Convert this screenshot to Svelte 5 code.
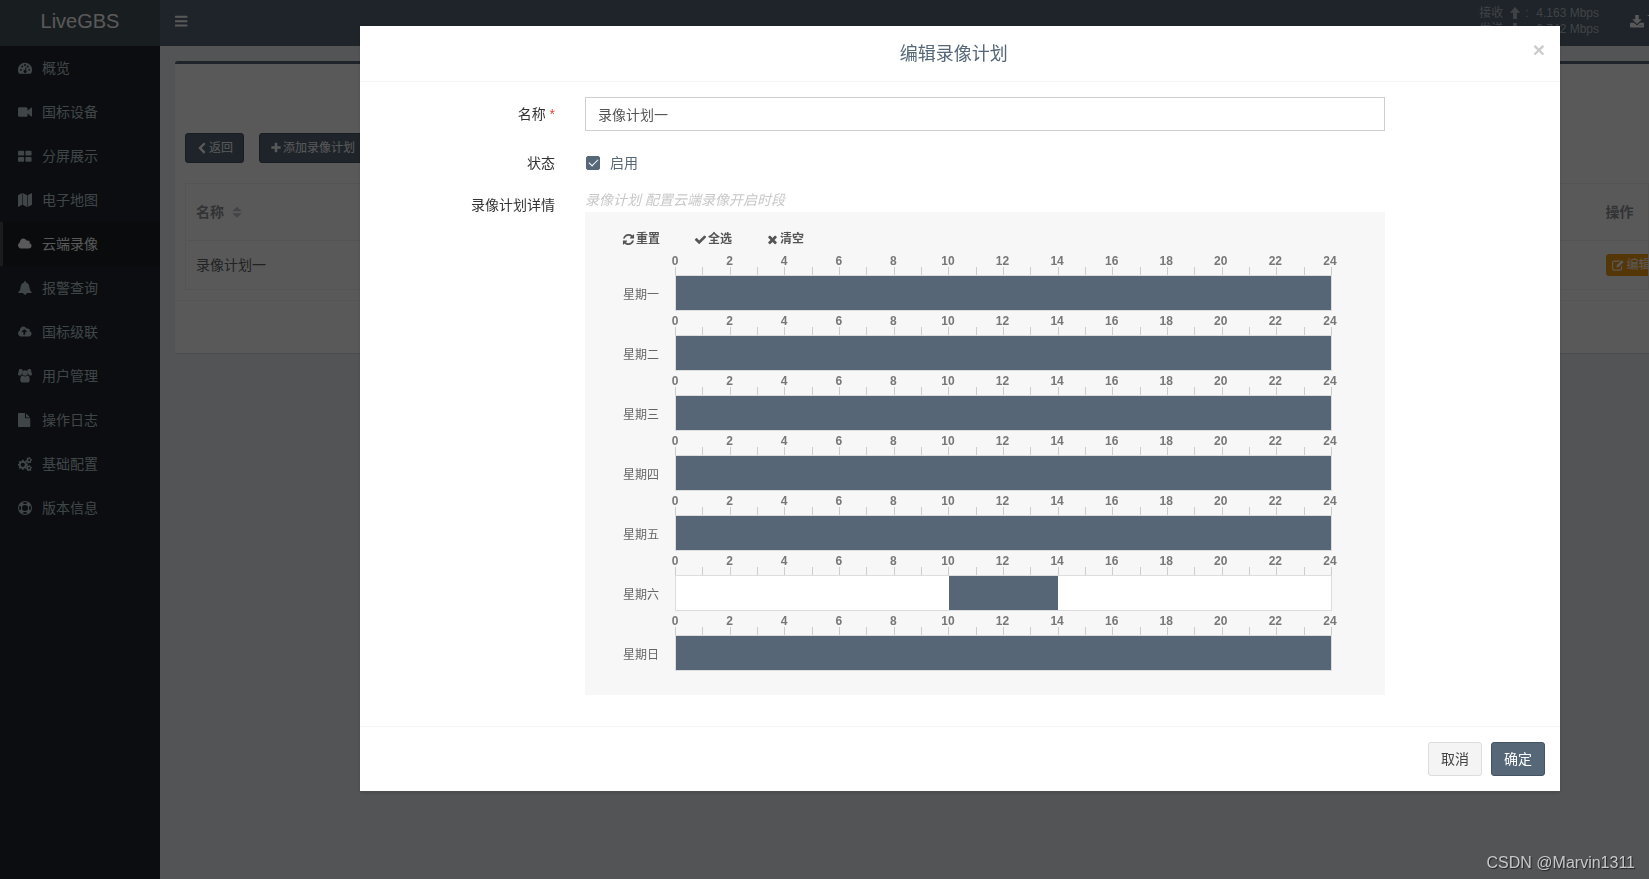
<script lang="ts">
    type Icon = { box: string; d: string };

    const cloud = 'q0 159-112.5 271.5t-271.5 112.5h-1088q-185 0-316.5-131.5t-131.5-316.5q0-132 71-241.5t187-163.5q-2-28-2-43 0-212 150-362t362-150q158 0 286.5 88t187.5 230q70-62 166-62 106 0 181 75t75 181q0 75-41 138 129 30 213 134.5t84 239.5z';

    const icons: Record<string, Icon> = {
        dashboard: { box: '0 0 16 16', d: 'M8 2a8 8 0 0 0-6.8 12.2q.2.3.6.3h12.4q.4 0 .6-.3A8 8 0 0 0 8 2zM3.3 9a1.1 1.1 0 1 1 0 2.2 1.1 1.1 0 0 1 0-2.2zM4.9 5.1a1.1 1.1 0 1 1 0 2.2 1.1 1.1 0 0 1 0-2.2zM8 3.5a1.1 1.1 0 1 1 0 2.2 1.1 1.1 0 0 1 0-2.2zM11.2 5.1a1.1 1.1 0 1 1 0 2.2 1.1 1.1 0 0 1 0-2.2zM12.7 9a1.1 1.1 0 1 1 0 2.2 1.1 1.1 0 0 1 0-2.2zM8.9 6.8l.9.3-.9 3.3a1.7 1.7 0 1 1-1-.2z' },
        video: { box: '0 0 16 16', d: 'M1.8 2.500h7.400Q11 2.500 11 4.300v2.400L14.900 3q1.100-.4 1.100.6v8.800q0 1-1.100.6L11 9.300v2.400Q11 13.500 9.200 13.500H1.800Q0 13.500 0 11.700V4.300Q0 2.500 1.800 2.500z' },
        grid: { box: '0 0 16 16', d: 'M1 2h5q1 0 1 1v3.500q0 1-1 1H1q-1 0-1-1V3q0-1 1-1zM9.500 2h5q1 0 1 1v3.500q0 1-1 1h-5q-1 0-1-1V3q0-1 1-1zM1 9h5q1 0 1 1v3.500q0 1-1 1H1q-1 0-1-1V10q0-1 1-1zM9.500 9h5q1 0 1 1v3.500q0 1-1 1h-5q-1 0-1-1V10q0-1 1-1z' },
        map: { box: '0 0 16 16', d: 'M0 2.600L4.800 0v13.400L.6 15.800Q0 16 0 15.400zM5.500 0l4.800 2.500v13.400l-4.800-2.500zM11 2.600L15.400.2q.6-.2.6.4v12.800L11 16z' },
        cloud: { box: '64 0 1984 1792', d: 'M1984 1152' + cloud },
        bell: { box: '0 0 16 16', d: 'M8 0q1 0 1 1v.6q3.600.8 3.900 4.900.2 4 2.600 6.200v1.100H10a2 2 0 0 1-4 0H.5v-1.100Q2.900 10.500 3.100 6.500 3.400 2.400 7 1.600V1q0-1 1-1z' },
        upload: { box: '64 0 1984 1792', d: 'M1344 864q0-14-9-23l-352-352q-9-9-23-9t-23 9l-351 351q-10 12-10 24 0 14 9 23t23 9h224v352q0 13 9.5 22.5t22.5 9.5h192q13 0 22.5-9.5t9.5-22.5v-352h224q13 0 22.5-9.5t9.5-22.5zm640 288' + cloud },
        users: { box: '0 0 16 16', d: 'M3.200 0a2.100 2.100 0 0 1 1.900 3Q4.300 4 4.500 6 3.500 6.300 3 7.500H1.500Q0 7.500 0 6 0 3.200 1.200 3.400A2.100 2.100 0 0 1 3.200 0zM12.800 0a2.100 2.100 0 0 0-1.900 3q.8 1 .6 3 1 .3 1.500 1.500h1.500Q16 7.500 16 6 16 3.200 14.800 3.400A2.100 2.100 0 0 0 12.800 0zM8 1.300a3.200 3.200 0 1 1 0 6.400A3.200 3.200 0 0 1 8 1.300zM5.300 7.300Q8 9.700 10.700 7.300q2.700.2 2.700 5.200Q13.400 15.500 11 15.500H5q-2.400 0-2.400-3 0-5 2.700-5.200z' },
        file: { box: '0 0 16 16', d: 'M.8 0H8v5.200q0 .8.8.8H14v9.200q0 .8-.8.8H.8q-.8 0-.8-.8V.8Q0 0 .8 0zM9.200 0.200L13.800 5H9.200z' },
        cogs: { box: '0 0 16 16', d: 'M4.500 3.200h2l.3 1.400 1 .4L9 4.300 10.300 5.700l-.8 1.100.4 1 1.300.2v1.900l-1.300.3-.4 1 .8 1.100L9 13.600l-1.200-.8-1 .4-.3 1.400h-2l-.2-1.400-1-.4-1.200.8L.8 12.200l.7-1.100-.4-1L0 9.900V8l1.100-.2.4-1L.8 5.700l1.300-1.400 1.200.7 1-.4zM5.500 6.500a2.400 2.400 0 1 0 0 4.800 2.400 2.400 0 0 0 0-4.800zM12.300.9L13.100 0l1.100.6-.1 1.100.6.6 1.100.1.200 1.300-1 .5-.3.800.5 1-.9.9-1.100-.4-.7.100-.7.900-1.100-.5v-1.100l-.5-.7-1.100-.2-.1-1.300 1-.5.2-.8-.4-1 .9-.9 1.100.4zM12.700 2.400a1.200 1.200 0 1 0 0 2.400 1.200 1.200 0 0 0 0-2.400zM12.300 9.900L13.100 9l1.100.6-.1 1.100.6.6 1.100.1.200 1.300-1 .5-.3.800.5 1-.9.9-1.100-.4-.7.100-.7.900-1.100-.5v-1.100l-.5-.7-1.100-.2-.1-1.300 1-.5.2-.8-.4-1 .9-.9 1.100.4zM12.700 11.400a1.200 1.200 0 1 0 0 2.400 1.200 1.200 0 0 0 0-2.400z' },
        ring: { box: '0 0 16 16', d: 'M8 0a8 8 0 1 1 0 16A8 8 0 0 1 8 0zM5.200 2l1.500 1.500q1.300-.4 2.600 0L10.800 2Q8 .5 5.200 2zM14 5.200l-1.500 1.500q.4 1.300 0 2.600L14 10.800Q15.500 8 14 5.200zM10.800 14l-1.500-1.500q-1.300.4-2.600 0L5.200 14q2.800 1.500 5.600 0zM2 10.800l1.500-1.500q-.4-1.300 0-2.600L2 5.200Q.5 8 2 10.800zM8 4.500a3.500 3.500 0 1 0 0 7 3.500 3.500 0 0 0 0-7z' },
        bars: { box: '0 0 16 16', d: 'M.6 2h13q.6 0 .6.6v1.200q0 .6-.6.6H.6Q0 4.400 0 3.800V2.600Q0 2 .6 2zM.6 7h13q.6 0 .6.6v1.200q0 .6-.6.6H.6Q0 9.400 0 8.800V7.600Q0 7 .6 7zM.6 12h13q.6 0 .6.6v1.200q0 .6-.6.6H.6q-.6 0-.6-.6v-1.200q0-.6.6-.6z' },
        arrowUp: { box: '0 0 16 16', d: 'M8 0l7 7.500h-4.500V16h-5V7.500H1z' },
        arrowDown: { box: '0 0 16 16', d: 'M8 16l7-7.500h-4.500V0h-5v8.500H1z' },
        download: { box: '0 0 16 16', d: 'M6 1h4v5h3.500L8 11.500 2.500 6H6zM0 11q0-1 1-1h3.500L8 13l3.500-3H15q1 0 1 1v3.500q0 .8-1 .8H1q-1 0-1-.8zM11 12.800h1v1h-1zM13 12.800h1v1h-1z' },
        back: { box: '0 0 16 16', d: 'M10.500.5l2.200 2.200L7.500 8l5.200 5.300-2.200 2.200L3 8z' },
        plus: { box: '0 0 1792 1792', d: 'M1600 736v192q0 40-28 68t-68 28h-416v416q0 40-28 68t-68 28h-192q-40 0-68-28t-28-68v-416h-416q-40 0-68-28t-28-68v-192q0-40 28-68t68-28h416v-416q0-40 28-68t68-28h192q40 0 68 28t28 68v416h416q40 0 68 28t28 68z' },
        sort: { box: '0 0 16 16', d: 'M8 1l6.500 6h-13zM8 15.500l6.500-6h-13z' },
        edit: { box: '0 0 16 16', d: 'M3 2h8l-1.300 1.500H3Q1.500 3.500 1.500 5v7.500Q1.500 14 3 14h7.500q1.500 0 1.500-1.500V10l1.500-1.500v4q0 3-3 3H3q-3 0-3-3V5q0-3 3-3zM13 1.500L15.500 4 8.500 11H6V8.500z' },
        refresh: { box: '0 0 1792 1792', d: 'M1639 1056q0 5-1 7-64 268-268 434.5t-478 166.5q-146 0-282.5-55t-243.5-157l-129 129q-19 19-45 19t-45-19-19-45v-448q0-26 19-45t45-19h448q26 0 45 19t19 45-19 45l-137 137q71 66 161 102t187 36q134 0 250-65t186-179q11-17 53-117 8-23 30-23h192q13 0 22.5 9.5t9.5 22.5zm25-800v448q0 26-19 45t-45 19h-448q-26 0-45-19t-19-45 19-45l138-138q-148-137-349-137-134 0-250 65t-186 179q-11 17-53 117-8 23-30 23h-199q-13 0-22.5-9.5t-9.5-22.5v-7q65-268 270-434.5t480-166.5q146 0 284 55.5t245 156.5l130-129q19-19 45-19t45 19 19 45z' },
        check: { box: '0 0 1792 1792', d: 'M1671 566q0 40-28 68l-724 724-136 136q-28 28-68 28t-68-28l-136-136-362-362q-28-28-28-68t28-68l136-136q28-28 68-28t68 28l294 295 656-657q28-28 68-28t68 28l136 136q28 28 28 68z' },
        times: { box: '0 0 1792 1792', d: 'M1490 1322q0 40-28 68l-136 136q-28 28-68 28t-68-28l-294-294-294 294q-28 28-68 28t-68-28l-136-136q-28-28-28-68t28-68l294-294-294-294q-28-28-28-68t28-68l136-136q28-28 68-28t68 28l294 294 294-294q28-28 68-28t68 28l136 136q28 28 28 68t-28 68l-294 294 294 294q28 28 28 68z' }
    };

    const menu = [
        { icon: 'dashboard', text: '概览' },
        { icon: 'video', text: '国标设备' },
        { icon: 'grid', text: '分屏展示' },
        { icon: 'map', text: '电子地图' },
        { icon: 'cloud', text: '云端录像', active: true },
        { icon: 'bell', text: '报警查询' },
        { icon: 'upload', text: '国标级联' },
        { icon: 'users', text: '用户管理' },
        { icon: 'file', text: '操作日志' },
        { icon: 'cogs', text: '基础配置' },
        { icon: 'ring', text: '版本信息' }
    ];

    const hours = Array.from({ length: 25 }, (_, i) => i);

    let name = $state('录像计划一');
    let enabled = $state(true);

    // each range is [start hour, end hour]
    let week = $state([
        { day: '星期一', ranges: [[0, 24]] },
        { day: '星期二', ranges: [[0, 24]] },
        { day: '星期三', ranges: [[0, 24]] },
        { day: '星期四', ranges: [[0, 24]] },
        { day: '星期五', ranges: [[0, 24]] },
        { day: '星期六', ranges: [[10, 14]] },
        { day: '星期日', ranges: [[0, 24]] }
    ]);
    const initial = $state.snapshot(week);

    function reset() {
        week = structuredClone(initial);
    }

    function selectAll() {
        week = week.map((w) => ({ day: w.day, ranges: [[0, 24]] }));
    }

    function clear() {
        week = week.map((w) => ({ day: w.day, ranges: [] }));
    }
</script>

{#snippet icon(id: string)}
    <svg class="icon" viewBox={icons[id].box} aria-hidden="true"><path fill-rule="evenodd" d={icons[id].d} /></svg>
{/snippet}

<div class="page">
    <aside class="sidebar">
        <a class="logo" href="#/">LiveGBS</a>
        <nav>
            {#each menu as item}
                <a class="menu-item" class:active={item.active} href="#/">
                    {@render icon(item.icon)}
                    <span>{item.text}</span>
                </a>
            {/each}
        </nav>
    </aside>

    <div class="main">
        <header class="navbar">
            <button class="toggle" aria-label="菜单">{@render icon('bars')}</button>
            <div class="traffic">
                <div><span>接收</span>{@render icon('arrowUp')}<span class="colon">:</span><span>4.163 Mbps</span></div>
                <div><span>发送</span>{@render icon('arrowDown')}<span class="colon">:</span><span>0.742 Mbps</span></div>
            </div>
            <a class="download" href="#/">{@render icon('download')}<span>下载</span></a>
        </header>

        <section class="box">
            <div class="box-tools">
                <button class="btn small primary">{@render icon('back')}返回</button>
                <button class="btn small primary">{@render icon('plus')}添加录像计划</button>
            </div>
            <table>
                <thead>
                    <tr>
                        <th>名称 {@render icon('sort')}</th>
                        <th class="action">操作</th>
                    </tr>
                </thead>
                <tbody>
                    <tr>
                        <td>录像计划一</td>
                        <td class="action"><button class="edit">{@render icon('edit')}编辑</button></td>
                    </tr>
                </tbody>
            </table>
            <div class="box-footer"></div>
        </section>
    </div>
</div>

<div class="backdrop">
    <div class="modal" role="dialog" aria-modal="true" aria-labelledby="modal-title">
        <div class="modal-header">
            <h4 id="modal-title">编辑录像计划</h4>
            <button class="close" aria-label="关闭">×</button>
        </div>

        <form class="modal-body">
            <label class="label" for="plan-name">名称 <span class="required">*</span></label>
            <input class="text-input" id="plan-name" type="text" bind:value={name} />

            <span class="label">状态</span>
            <div class="state">
                <input id="plan-enabled" type="checkbox" bind:checked={enabled} />
                <label for="plan-enabled">启用</label>
            </div>

            <span class="label">录像计划详情</span>
            <div>
                <div class="hint">录像计划 配置云端录像开启时段</div>
                <div class="schedule">
                    <div class="schedule-tools">
                        <button type="button" onclick={reset}>{@render icon('refresh')}重置</button>
                        <button type="button" onclick={selectAll}>{@render icon('check')}全选</button>
                        <button type="button" onclick={clear}>{@render icon('times')}清空</button>
                    </div>
                    {#each week as row}
                        <div class="day">
                            <div class="day-name">{row.day}</div>
                            <div class="timeline">
                                <div class="hours">
                                    {#each hours.filter((h) => h % 2 === 0) as h}
                                        <span>{h}</span>
                                    {/each}
                                </div>
                                <div class="ticks">
                                    {#each hours as h (h)}
                                        <i></i>
                                    {/each}
                                </div>
                                <div class="bar">
                                    {#each row.ranges as [from, to]}
                                        <div class="range" style="left: {(from / 24) * 100}%; width: {((to - from) / 24) * 100}%"></div>
                                    {/each}
                                </div>
                            </div>
                        </div>
                    {/each}
                </div>
            </div>
        </form>

        <div class="modal-footer">
            <button class="btn default">取消</button>
            <button class="btn primary">确定</button>
        </div>
    </div>
</div>

<div class="watermark">CSDN @Marvin1311</div>

<style>
    :global(body) {
        font-family: "Liberation Sans", "Noto Sans CJK SC", sans-serif;
        font-size: 14px;
        line-height: 20px;
        color: #333;
        background: #ecf0f5;
        overflow: hidden;
    }

    * {
        box-sizing: border-box;
    }

    button, input {
        font: inherit;
        margin: 0;
    }

    a {
        color: inherit;
        text-decoration: none;
    }

    .icon {
        flex: none;
        width: 14px;
        height: 14px;
        fill: currentColor;
    }

    .page {
        display: flex;
        min-height: 100vh;
    }

    .sidebar {
        flex: none;
        width: 160px;
        background: #20272e;
        color: #b8c7ce;
    }

    .logo {
        display: block;
        height: 46px;
        line-height: 42px;
        background: #47535c;
        color: #fff;
        font-size: 20px;
        text-align: center;
    }

    .menu-item {
        display: flex;
        align-items: center;
        gap: 10px;
        height: 44px;
        padding-left: 15px;
        border-left: 3px solid transparent;
    }

    .menu-item.active {
        color: #fff;
        background: #1c2126;
        border-left-color: #4a5056;
    }

    .main {
        flex: 1;
        min-width: 0;
        overflow: hidden;
    }

    .navbar {
        display: flex;
        align-items: center;
        height: 46px;
        padding-left: 15px;
        background: #566778;
        color: #fff;
    }

    .toggle {
        display: flex;
        height: 42px;
        align-items: center;
        align-self: flex-start;
        padding: 0;
        border: 0;
        background: none;
        color: inherit;
    }

    .traffic {
        margin-left: auto;
        align-self: flex-start;
        padding-top: 5px;
        font-size: 12px;
        line-height: 16px;
        color: #b8c0c8;
    }

    .traffic div {
        display: flex;
        align-items: center;
        height: 16px;
    }

    .traffic .icon {
        width: 12px;
        height: 12px;
        margin: 0 4px 0 6px;
    }

    .colon {
        width: 11px;
    }

    .download {
        display: flex;
        align-items: center;
        align-self: flex-start;
        gap: 3px;
        width: 19px;
        height: 42px;
        margin-left: 31px;
        white-space: nowrap;
    }

    .box {
        margin: 15px 0 0 15px;
        background: #fff;
        border-top: 3px solid #566778;
        border-radius: 3px 0 0 3px;
        box-shadow: 0 1px 1px rgba(0, 0, 0, 0.1);
    }

    .box-tools {
        display: flex;
        gap: 15px;
        padding: 69px 10px 20px;
    }

    .btn {
        padding: 0 12px;
        height: 34px;
        border: 1px solid;
        border-radius: 3px;
        white-space: nowrap;
    }

    .btn.primary {
        background: #566778;
        border-color: #455463;
        color: #fff;
    }

    .btn.default {
        background: #f4f4f4;
        border-color: #ddd;
        color: #444;
    }

    .btn.small {
        display: flex;
        align-items: center;
        gap: 1px;
        height: 30px;
        padding: 0 10px;
        font-size: 12px;
    }

    .btn.small .icon {
        width: 12px;
        height: 12px;
    }

    table {
        width: calc(100% - 10px);
        margin-left: 10px;
        border-collapse: collapse;
        border: 1px solid #f0f0f0;
        color: #606266;
    }

    th, td {
        padding: 0 10px;
        text-align: left;
        border-bottom: 1px solid #f0f0f0;
    }

    th {
        height: 57px;
        color: #909399;
    }

    th .icon {
        width: 12px;
        height: 12px;
        margin-left: 3px;
        vertical-align: -1px;
        color: #c0c4cc;
    }

    td {
        height: 49px;
    }

    .action {
        width: 43px;
        max-width: 43px;
        padding: 0;
        overflow: hidden;
    }

    .edit {
        display: flex;
        align-items: center;
        gap: 3px;
        height: 22px;
        padding: 0 6px;
        border: 0;
        border-radius: 3px;
        background: #f39c12;
        color: #fff;
        font-size: 12px;
        white-space: nowrap;
    }

    .edit .icon {
        width: 12px;
        height: 12px;
    }

    .box-footer {
        height: 53px;
        margin-top: 10px;
        border-top: 1px solid #f4f4f4;
    }

    .backdrop {
        position: fixed;
        inset: 0;
        background: rgba(0, 0, 0, 0.65);
        overflow: hidden;
    }

    .modal {
        margin: 26px 89px 0 360px;
        background: #fff;
        box-shadow: 0 2px 3px rgba(0, 0, 0, 0.15);
    }

    .modal-header {
        display: flex;
        align-items: flex-start;
        padding: 15px 15px 13px;
        border-bottom: 1px solid #f4f4f4;
    }

    h4 {
        flex: 1;
        margin: 0;
        font-size: 18px;
        font-weight: 400;
        line-height: 27px;
        text-align: center;
        color: #566778;
    }

    .close {
        padding: 0;
        border: 0;
        background: none;
        font-size: 21px;
        font-weight: 700;
        line-height: 18px;
        color: #ccc;
    }

    .modal-body {
        display: grid;
        grid-template-columns: 180px 1fr;
        column-gap: 30px;
        padding: 15px 175px 31px 15px;
    }

    .label {
        line-height: 34px;
        text-align: right;
    }

    .required {
        color: #dd4b39;
    }

    .text-input {
        width: 100%;
        height: 34px;
        margin-bottom: 15px;
        padding: 0 12px;
        border: 1px solid #ccd0d4;
        background: #fff;
        color: #555;
        outline: none;
    }

    .state {
        display: flex;
        align-items: center;
        gap: 10px;
        height: 34px;
        margin-bottom: 8px;
        padding-left: 1px;
        color: #566778;
    }

    .state input {
        display: flex;
        justify-content: center;
        appearance: none;
        width: 14px;
        height: 14px;
        border: 1px solid #566778;
        border-radius: 2px;
    }

    .state input:checked {
        background: #566778;
    }

    .state input:checked::after {
        content: "";
        width: 4px;
        height: 8px;
        border: solid #fff;
        border-width: 0 1px 1px 0;
        transform: rotate(45deg);
    }

    .hint {
        line-height: 24px;
        font-style: italic;
        color: #c8c8c8;
    }

    .schedule {
        padding: 15px 53px 24px 37px;
        background: #f7f7f7;
        font-size: 12px;
        color: #666;
    }

    .schedule-tools {
        display: flex;
        gap: 34px;
        height: 24px;
    }

    .schedule-tools button {
        display: flex;
        align-items: center;
        gap: 1px;
        padding: 0;
        border: 0;
        background: none;
        color: #555;
        font-weight: 700;
    }

    .schedule-tools .icon {
        width: 13px;
        height: 13px;
    }

    .day {
        display: flex;
        align-items: flex-end;
    }

    .day-name {
        width: 53px;
        padding-left: 1px;
        line-height: 32px;
    }

    .timeline {
        flex: 1;
    }

    .hours {
        display: flex;
        justify-content: space-between;
        padding: 4px 2px 0 0;
        line-height: 12px;
        font-weight: 700;
        color: #777;
    }

    /* zero-width items keep every figure centred over its tick */
    .hours span {
        display: flex;
        justify-content: center;
        width: 0;
    }

    .ticks {
        display: flex;
        justify-content: space-between;
    }

    .ticks i {
        width: 1px;
        height: 8px;
        background: #ccc;
    }

    .bar {
        position: relative;
        height: 36px;
        border: 1px solid #ddd;
        background: #fff;
    }

    .range {
        position: absolute;
        top: 0;
        bottom: 0;
        background: #566676;
    }

    .modal-footer {
        display: flex;
        justify-content: flex-end;
        gap: 9px;
        padding: 15px;
        border-top: 1px solid #f4f4f4;
    }

    .watermark {
        position: fixed;
        right: 14px;
        bottom: 6px;
        font-size: 16px;
        color: #c8c8c8;
        text-shadow: 1px 1px 1px rgba(0, 0, 0, 0.6);
    }
</style>
